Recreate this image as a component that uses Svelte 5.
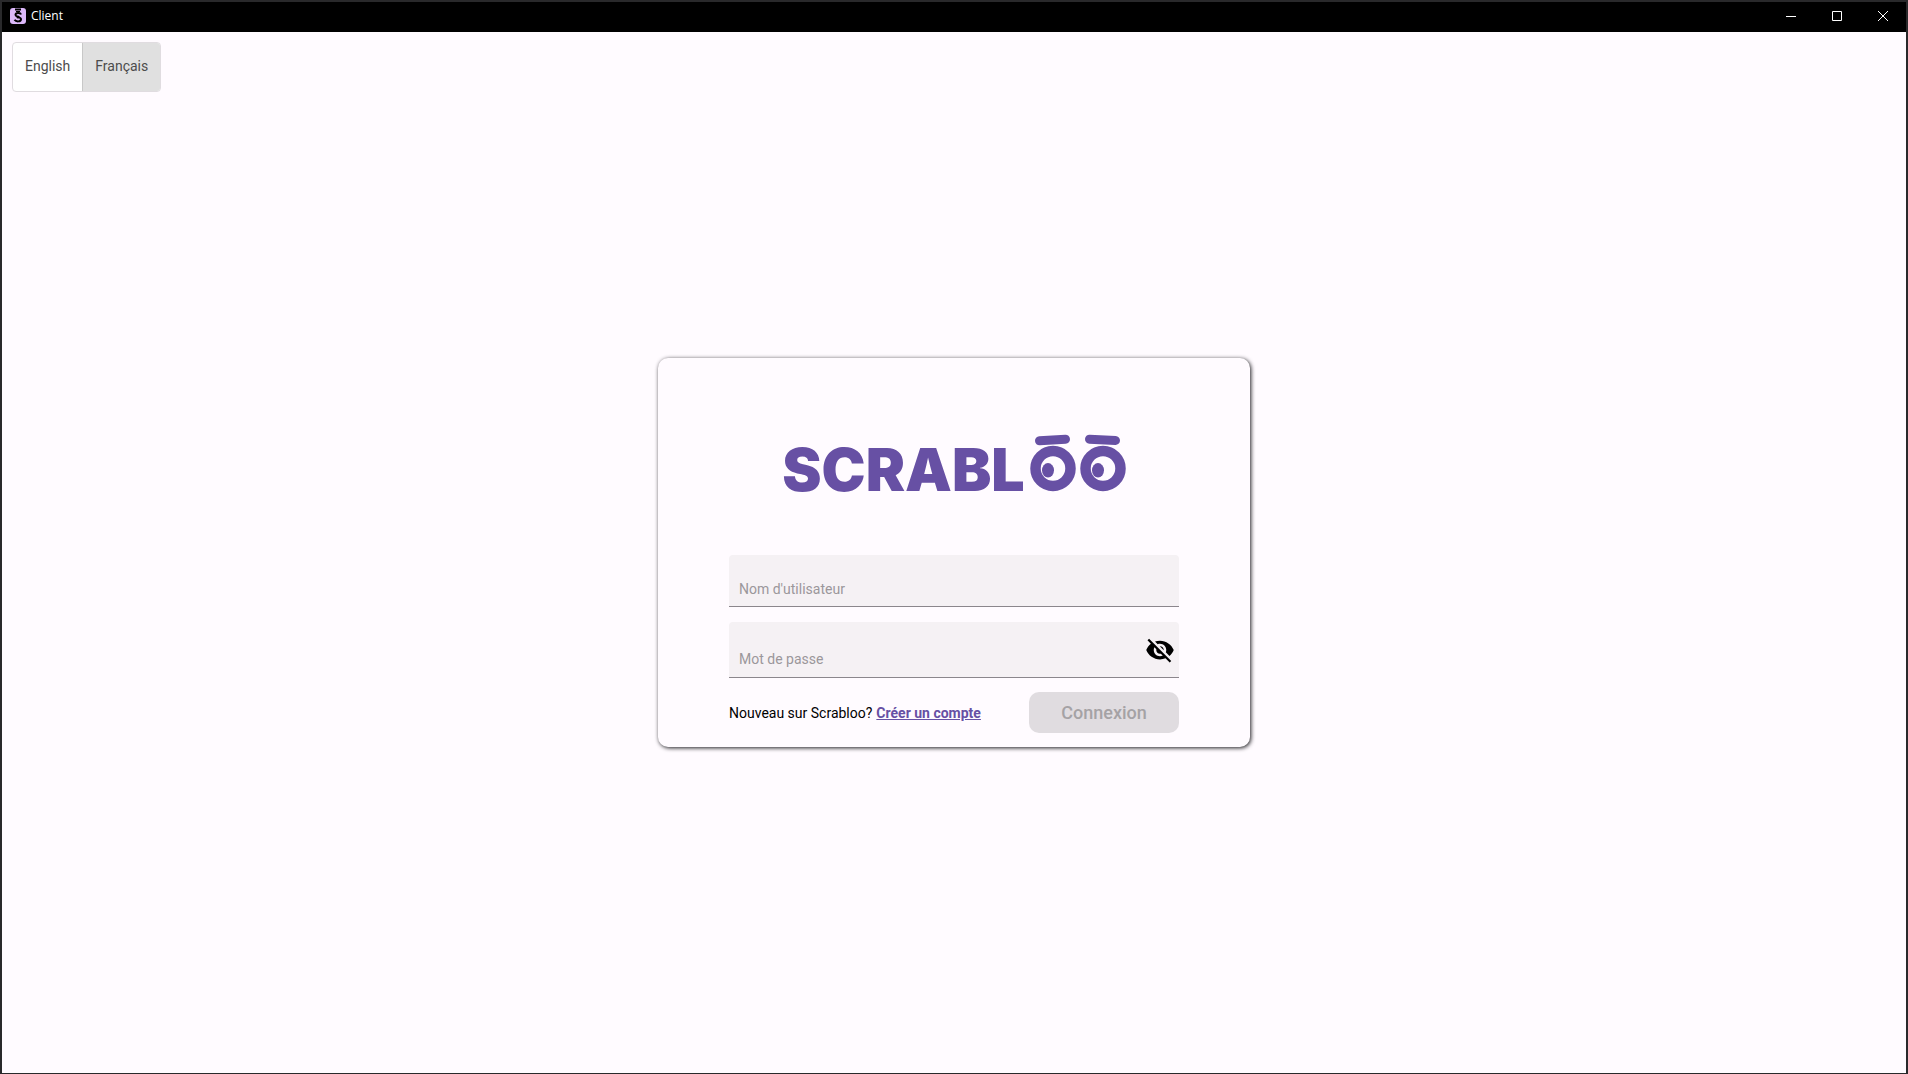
<script>
  let language = $state('fr');
  let username = $state('');
  let password = $state('');
  let visible = $state(false);
  const languages = [
    { code: 'en', label: 'English' },
    { code: 'fr', label: 'Français' }
  ];
</script>

<div class="window">
  <header class="titlebar">
    <svg class="app-icon" viewBox="0 0 16 16" aria-hidden="true">
      <rect width="16" height="16" rx="3" fill="#dcb8fa" />
      <path d="M5 1.500h6M11 6.500C10.500 4.500 5.500 4.500 5.500 7c0 2.200 5.500 1.600 5.500 4.200 0 2.800-5 2.800-6.500.6" fill="none" stroke="#000" stroke-width="2" />
      <path d="M6 3.500h4" stroke="#000" />
      <circle cx="8" cy="9" r="1.500" fill="#000" />
    </svg>
    <span class="title">Client</span>
    <div class="controls">
      <button aria-label="Minimize"><svg viewBox="0 0 10 10"><path d="M0 5.500h10" /></svg></button>
      <button aria-label="Maximize"><svg viewBox="0 0 10 10"><path d="M.5.5h9v9h-9z" /></svg></button>
      <button aria-label="Close"><svg viewBox="0 0 10 10"><path d="M0 0l10 10M10 0L0 10" /></svg></button>
    </div>
  </header>

  <main>
    <div class="languages" role="group" aria-label="Langue">
      {#each languages as item}
        <button class:active={language === item.code} aria-pressed={language === item.code} onclick={() => (language = item.code)}>{item.label}</button>
      {/each}
    </div>

    <form class="card" onsubmit={(e) => e.preventDefault()}>
      <h1 class="logo" aria-label="Scrabloo">
        <span>SCRABL</span>
        <svg viewBox="0 0 96 58" aria-hidden="true">
          <g fill="none" stroke="#6750a4">
            <circle cx="23" cy="34.500" r="17.500" stroke-width="10.500" />
            <circle cx="73" cy="34.500" r="17.500" stroke-width="10.500" />
            <path d="M9.500 6.800L35.500 5.200M59.500 5.200l26 1.300" stroke-width="9" stroke-linecap="round" />
          </g>
          <g fill="#6750a4">
            <ellipse cx="18" cy="36.300" rx="6" ry="7.300" />
            <ellipse cx="68" cy="36.300" rx="6" ry="7.300" />
          </g>
        </svg>
      </h1>

      <div class="field">
        <input aria-label="Nom d'utilisateur" placeholder="Nom d'utilisateur" autocomplete="username" bind:value={username} />
      </div>
      <div class="field password">
        <input type={visible ? 'text' : 'password'} aria-label="Mot de passe" placeholder="Mot de passe" autocomplete="current-password" bind:value={password} />
        <button type="button" aria-label="Afficher le mot de passe" aria-pressed={visible} onclick={() => (visible = !visible)}>
          <svg viewBox="0 0 24 24"><path d="M12 7c2.760 0 5 2.240 5 5 0 .65-.13 1.260-.36 1.830l2.920 2.920c1.510-1.260 2.700-2.890 3.430-4.750-1.730-4.390-6-7.500-11-7.500-1.400 0-2.740.25-3.980.7l2.160 2.160C10.740 7.130 11.350 7 12 7zM2 4.270l2.280 2.280.46.46C3.080 8.300 1.780 10.020 1 12c1.730 4.390 6 7.500 11 7.500 1.550 0 3.030-.3 4.380-.84l.42.42L19.730 22 21 20.730 3.270 3 2 4.270zM7.530 9.800l1.550 1.550c-.05.21-.08.43-.08.65 0 1.660 1.340 3 3 3 .22 0 .44-.03.65-.08l1.550 1.550c-.67.33-1.410.53-2.200.53-2.760 0-5-2.240-5-5 0-.79.2-1.530.53-2.200zm4.310-.78l3.150 3.150.02-.16c0-1.660-1.340-3-3-3l-.17.01z" /></svg>
        </button>
      </div>

      <div class="actions">
        <p><span>Nouveau sur Scrabloo?</span><a href="#register">Créer un compte</a></p>
        <button class="submit" disabled={!username || !password}>Connexion</button>
      </div>
    </form>
  </main>
</div>

<style>
  :global(body) {
    margin: 0;
    background: #202020;
  }

  .window {
    box-sizing: border-box;
    min-height: 100vh;
    display: flex;
    flex-direction: column;
    border: 2px solid #29292b;
    border-bottom-width: 1px;
    background: #fffbff;
    font-family: Roboto, sans-serif;
  }

  button {
    border: 0;
    padding: 0;
    background: none;
    font: inherit;
    cursor: pointer;
  }

  .titlebar {
    box-sizing: border-box;
    display: flex;
    align-items: center;
    height: 30px;
    padding: 0 0 2px 8px;
    background: #000;
    color: #fff;
  }

  .app-icon {
    width: 16px;
    height: 16px;
  }

  .title {
    margin-left: 5px;
    font: 12px/16px "Open Sans", sans-serif;
  }

  .controls {
    display: flex;
    height: 100%;
    margin-left: auto;
  }

  .controls button {
    display: grid;
    place-items: center;
    width: 46px;
  }

  .controls svg {
    width: 10px;
    height: 10px;
    fill: none;
    stroke: #fff;
  }

  main {
    position: relative;
    flex: 1;
    display: grid;
    place-items: center;
  }

  .languages {
    position: absolute;
    top: 10px;
    left: 10px;
    display: flex;
    overflow: hidden;
    border: 1px solid #e0dce0;
    border-radius: 4px;
    background: #fff;
  }

  .languages button {
    padding: 0 12px 2px;
    color: #4c4c4c;
    font-size: 14px;
    line-height: 46px;
  }

  .languages button + button {
    border-left: 1px solid #c8c8c8;
  }

  .languages .active {
    background: #e0e0e0;
  }

  .card {
    box-sizing: border-box;
    width: 592px;
    max-width: 100%;
    padding: 76px 71px 14px;
    border-radius: 10px;
    box-shadow: 1px 1px 4px #1c1b1f;
    background: #fffbff;
  }

  .logo {
    display: flex;
    align-items: flex-end;
    justify-content: center;
    gap: 5px;
    margin: 0 0 63px;
    color: #6750a4;
    font: 900 59px/44px Inter, sans-serif;
  }

  .logo svg {
    width: 96px;
    height: 58px;
  }

  .field {
    display: flex;
    height: 51px;
    border-bottom: 1px solid #8b868c;
    border-radius: 4px 4px 0 0;
    background: #f5f1f4;
  }

  .password {
    height: 55px;
    margin: 15px 0 14px;
  }

  input {
    flex: 1;
    min-width: 0;
    padding: 16px 10px 0;
    border: 0;
    outline: 0;
    background: none;
    font: 14px/20px Roboto, sans-serif;
  }

  .password input {
    padding-top: 18px;
  }

  input::placeholder {
    color: #9b979b;
    opacity: 1;
  }

  .password button {
    width: 38px;
  }

  .password svg {
    display: block;
    width: 30px;
    height: 30px;
    margin: auto;
  }

  .actions {
    display: flex;
    align-items: center;
    justify-content: space-between;
  }

  .actions p {
    display: flex;
    gap: 4px;
    margin: 0;
    color: #000;
    font-size: 14px;
    line-height: 20px;
  }

  .actions a {
    color: #6750a4;
    font-weight: 700;
  }

  .submit {
    width: 150px;
    border-radius: 10px;
    background: #e0dce0;
    color: #a5a2a5;
    font-size: 18px;
    font-weight: 500;
    line-height: 41px;
  }
</style>
